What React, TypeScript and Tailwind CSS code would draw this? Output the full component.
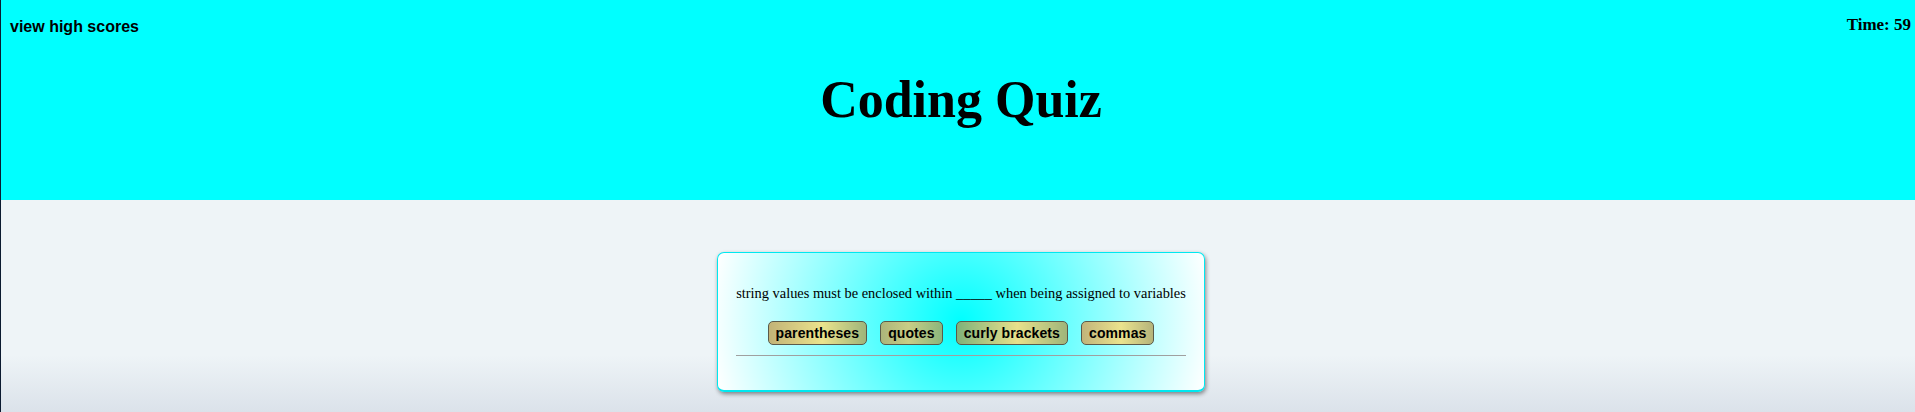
import React from "react";

const answers = [
  { label: "parentheses", bg: "bg-[linear-gradient(to_right,#c2b377_0%,#ebe38c_55%,#9fb57a_100%)]" },
  { label: "quotes", bg: "bg-[linear-gradient(to_right,#acb47a_0%,#c9cd86_45%,#8bb67c_100%)]" },
  { label: "curly brackets", bg: "bg-[linear-gradient(to_right,#7fb27a_0%,#e8e08b_55%,#9fb57a_100%)]" },
  { label: "commas", bg: "bg-[linear-gradient(to_right,#c1b47a_0%,#ebe38d_55%,#b5b47b_100%)]" },
];

const serif = '"Liberation Serif", "Times New Roman", Times, serif';
const sans = '"Liberation Sans", Arial, Helvetica, sans-serif';

export default function App() {
  return (
    <div className="min-h-[412px] w-full bg-[#0b1a30] pl-[1px]">
      <div className="min-h-[412px] bg-[linear-gradient(to_bottom,#00ffff_0px,#00ffff_200px,#eef4f7_200px,#eef4f7_355px,#dbe2ea_412px)]">
        <header className="h-[200px] bg-[#00ffff] flex flex-col">
          <div className="flex items-start justify-between">
            <a
              href="#"
              className="pl-[9px] pt-[18px] text-[16px] leading-[18px] font-bold text-black"
              style={{ fontFamily: sans }}
            >
              view high scores
            </a>
            <div
              className="pr-[4px] pt-[15px] text-[17px] leading-[20px] font-bold text-black"
              style={{ fontFamily: serif }}
            >
              Time: 59
            </div>
          </div>
          <h1
            className="mt-[34px] pl-[6px] text-center text-[52px] leading-[60px] font-bold text-black"
            style={{ fontFamily: serif }}
          >
            Coding Quiz
          </h1>
        </header>
        <main className="flex justify-center pl-[6px] pt-[52px]">
          <div className="w-[488px] h-[140px] rounded-[7px] border border-[#00e8f0] border-b-2 shadow-[1px_2px_4px_rgba(0,0,0,0.45)] bg-[radial-gradient(circle,#00ffff_0%,#ffffff_100%)] px-[18px] pt-[31px]">
            <p
              className="font-serif text-center text-[14.4px] leading-[18px] text-black whitespace-nowrap"
              style={{ fontFamily: serif }}
            >
              string values must be enclosed within _____ when being assigned to variables
            </p>
            <div className="mt-[19px] flex justify-center gap-[13px]">
              {answers.map((a) => (
                <button
                  key={a.label}
                  className={`${a.bg} rounded-[5px] border border-[#5a5a4a] px-[7px] py-[3px] text-[14px] leading-[16px] font-bold text-black tracking-[0.1px]`}
                  style={{ fontFamily: sans }}
                >
                  {a.label}
                </button>
              ))}
            </div>
            <hr className="mt-[10px] border-0 border-t border-[#a0a0a0]" />
          </div>
        </main>
      </div>
    </div>
  );
}
